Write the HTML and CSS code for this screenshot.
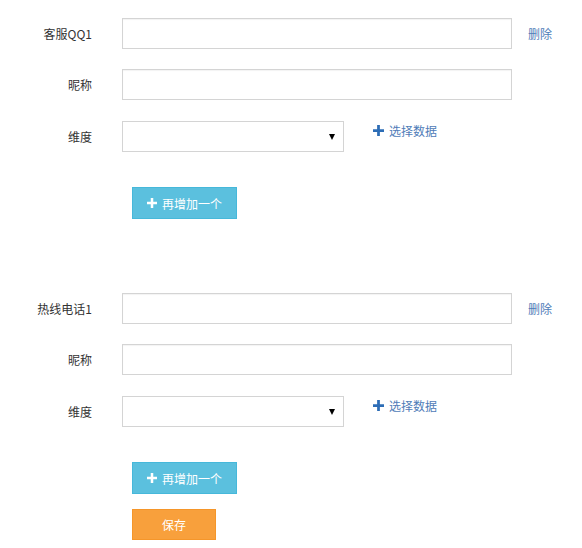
FILE: index.html
```html
<!DOCTYPE html>
<html lang="zh">
<head>
<meta charset="utf-8">
<link rel="stylesheet" href="styles.css">
</head>
<body>
<div class="page">
  <section class="group">
    <div class="row">
      <label class="lbl">客服QQ1</label>
      <input class="inp" type="text">
      <a class="link del">删除</a>
    </div>
    <div class="row">
      <label class="lbl">昵称</label>
      <input class="inp" type="text">
    </div>
    <div class="row">
      <label class="lbl">维度</label>
      <div class="sel"><span class="arrow"></span></div>
      <a class="link pick"><svg class="plus" viewBox="0 0 12 12"><path d="M4.5 0h3v4.5H12v3H7.5V12h-3V7.5H0v-3h4.5z" fill="#2d6db6"/></svg>选择数据</a>
    </div>
    <div class="btnrow">
      <button class="btn add"><svg class="plus" viewBox="0 0 12 12"><path d="M4.5 0h3v4.5H12v3H7.5V12h-3V7.5H0v-3h4.5z" fill="#fff"/></svg>再增加一个</button>
    </div>
  </section>

  <section class="group second">
    <div class="row">
      <label class="lbl">热线电话1</label>
      <input class="inp" type="text">
      <a class="link del">删除</a>
    </div>
    <div class="row">
      <label class="lbl">昵称</label>
      <input class="inp" type="text">
    </div>
    <div class="row">
      <label class="lbl">维度</label>
      <div class="sel"><span class="arrow"></span></div>
      <a class="link pick"><svg class="plus" viewBox="0 0 12 12"><path d="M4.5 0h3v4.5H12v3H7.5V12h-3V7.5H0v-3h4.5z" fill="#2d6db6"/></svg>选择数据</a>
    </div>
    <div class="btnrow">
      <button class="btn add"><svg class="plus" viewBox="0 0 12 12"><path d="M4.5 0h3v4.5H12v3H7.5V12h-3V7.5H0v-3h4.5z" fill="#fff"/></svg>再增加一个</button>
    </div>
    <div class="btnrow save-row">
      <button class="btn save">保存</button>
    </div>
  </section>
</div>
</body>
</html>
```
FILE: styles.css
```css
* { box-sizing: border-box; }
html, body { margin: 0; padding: 0; background: #fff; }
body {
  font-family: "Noto Sans CJK SC", "Noto Sans", "Liberation Sans", sans-serif;
  font-size: 12px;
  color: #333;
}
.page { padding-top: 18px; }
.group { display: flex; flex-direction: column; }
.second { margin-top: 74px; }
.row {
  display: flex;
  align-items: center;
  height: 31px;
  margin-bottom: 20px;
}
.row:nth-child(2) { margin-bottom: 21px; }
.row:nth-child(3) { margin-bottom: 35px; }
.lbl {
  width: 92px;
  text-align: right;
  margin-right: 30px;
  color: #333;
  line-height: 31px;
}
.inp {
  width: 390px;
  height: 31px;
  border: 1px solid #d4d4d4;
  box-shadow: inset 0 1px 1px rgba(0,0,0,0.05);
  outline: none;
  padding: 0 8px;
  margin: 0;
  font: inherit;
}
.sel {
  width: 222px;
  height: 31px;
  border: 1px solid #d4d4d4;
  display: flex;
  align-items: center;
  justify-content: flex-end;
  padding-right: 8px;
}
.arrow {
  width: 0; height: 0;
  border-left: 3.5px solid transparent;
  border-right: 3.5px solid transparent;
  border-top: 6px solid #000;
  margin-top: 1px;
}
.link { color: #4f7cb8; cursor: pointer; }
.del { margin-left: 16px; }
.pick {
  margin-left: 29px;
  margin-top: -13px;
  display: flex;
  align-items: center;
  font-size: 12px;
}
.pick .plus { width: 11px; height: 11px; margin-right: 5px; }
.btnrow { padding-left: 132px; display: flex; }
.btn {
  font: inherit;
  font-size: 12px;
  color: #fff;
  border: 1px solid;
  height: 32px;
  padding: 0;
  display: flex;
  align-items: center;
  justify-content: center;
}
.add {
  width: 105px;
  background: #5bc0de;
  border-color: #46b8da;
}
.add .plus { width: 10px; height: 10px; margin-right: 5px; }
.save-row { margin-top: 15px; }
.save {
  width: 84px;
  height: 31px;
  background: #f8a03c;
  border-color: #f5962a;
}
```
